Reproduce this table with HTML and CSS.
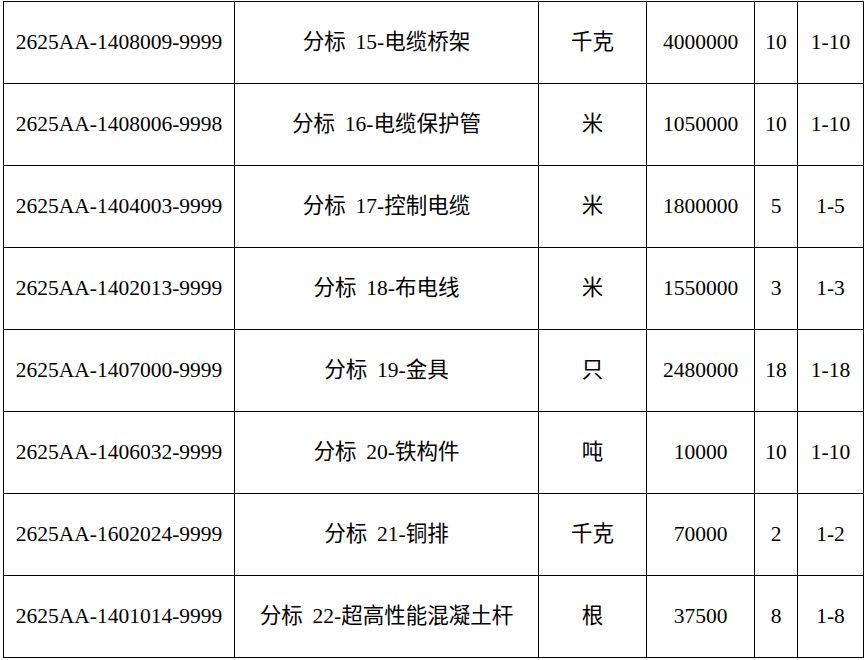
FILE: index.html
```html
<!DOCTYPE html>
<html lang="zh-CN">
<head>
<meta charset="utf-8">
<title>分标清单</title>
<link rel="stylesheet" href="styles.css">
</head>
<body>
<table class="sheet">
  <colgroup>
    <col class="c-code">
    <col class="c-name">
    <col class="c-unit">
    <col class="c-qty">
    <col class="c-num">
    <col class="c-range">
  </colgroup>
  <tbody>
    <tr><td>2625AA-1408009-9999</td><td>分标 15-电缆桥架</td><td>千克</td><td>4000000</td><td>10</td><td>1-10</td></tr>
    <tr><td>2625AA-1408006-9998</td><td>分标 16-电缆保护管</td><td>米</td><td>1050000</td><td>10</td><td>1-10</td></tr>
    <tr><td>2625AA-1404003-9999</td><td>分标 17-控制电缆</td><td>米</td><td>1800000</td><td>5</td><td>1-5</td></tr>
    <tr><td>2625AA-1402013-9999</td><td>分标 18-布电线</td><td>米</td><td>1550000</td><td>3</td><td>1-3</td></tr>
    <tr><td>2625AA-1407000-9999</td><td>分标 19-金具</td><td>只</td><td>2480000</td><td>18</td><td>1-18</td></tr>
    <tr><td>2625AA-1406032-9999</td><td>分标 20-铁构件</td><td>吨</td><td>10000</td><td>10</td><td>1-10</td></tr>
    <tr><td>2625AA-1602024-9999</td><td>分标 21-铜排</td><td>千克</td><td>70000</td><td>2</td><td>1-2</td></tr>
    <tr><td>2625AA-1401014-9999</td><td>分标 22-超高性能混凝土杆</td><td>根</td><td>37500</td><td>8</td><td>1-8</td></tr>
  </tbody>
</table>
</body>
</html>
```
FILE: styles.css
```css
html, body {
  margin: 0;
  padding: 0;
  background: #ffffff;
}

body {
  padding: 1px 0 0 3px;
  font-family: "Liberation Serif", "Noto Sans CJK SC", serif;
  font-size: 21.5px;
  color: #000000;
}

.sheet {
  border-collapse: collapse;
  table-layout: fixed;
  width: 860px;
}

.c-code { width: 231px; }
.c-name { width: 304px; }
.c-unit { width: 108px; }
.c-qty { width: 108px; }
.c-num { width: 43px; }
.c-range { width: 66px; }

.sheet tr {
  height: 82px;
}

.sheet td {
  border: 1px solid #000000;
  padding: 0;
  text-align: center;
  vertical-align: middle;
  white-space: nowrap;
  word-spacing: 0.2em;
  line-height: 1;
}
```
